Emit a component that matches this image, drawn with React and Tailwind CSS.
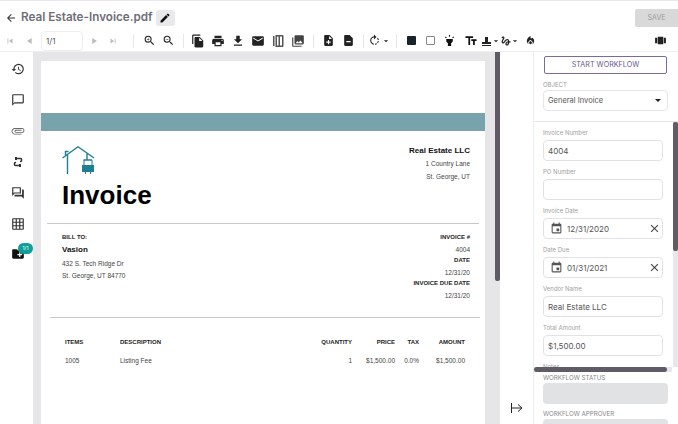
import React from 'react';
import {
  MdArrowBack, MdEdit, MdSkipPrevious, MdSkipNext, MdPlayArrow, MdZoomIn, MdZoomOut, MdFileCopy, MdPrint,
  MdFileDownload, MdEmail, MdPhotoLibrary, MdNoteAdd, MdRotateRight, MdArrowDropDown, MdHighlight,
  MdTextFields, MdLocalFireDepartment, MdHistory, MdChatBubbleOutline, MdAttachFile, MdOutlineForum,
  MdGridOn, MdEvent, MdClose, MdCreateNewFolder, MdGesture, MdViewCarousel,
} from 'react-icons/md';

const DOC_FONT = 'font-["Liberation_Sans",Arial,sans-serif]';

function Sep() {
  return <div className="w-px h-[14px] bg-gray-200" />;
}

function TextField({ label, value }) {
  return (
    <div className="mb-[6px]">
      <div className="text-[6px] leading-[10px] text-[#a0a0a0] mb-[2px]">{label}</div>
      <div className="h-[21px] border border-[#e2e2e6] rounded-[4px] px-[4px] flex items-center text-[8px] text-[#555]">{value}</div>
    </div>
  );
}

function DateField({ label, value }) {
  return (
    <div className="mb-[6px]">
      <div className="text-[6px] leading-[10px] text-[#a0a0a0] mb-[2px]">{label}</div>
      <div className="h-[21px] border border-[#e2e2e6] rounded-[4px] pl-[6px] pr-[1px] flex items-center text-[8px] text-[#555]">
        <MdEvent size={13} className="text-[#555] mr-[4px]" />
        <span className="flex-1">{value}</span>
        <MdClose size={13} className="text-[#444]" />
      </div>
    </div>
  );
}

export default function App() {
  return (
    <div className='w-[678px] h-[424px] overflow-hidden bg-white flex flex-col font-["Inter",sans-serif] border-t border-[#e8e8ec]'>
      {/* Title row */}
      <div className="h-[29px] pt-[5px] flex items-center shrink-0">
        <MdArrowBack size={12} className="ml-[5px] text-[#333]" />
        <span className="ml-[4px] text-[11.700px] font-semibold text-[#6e6e78] whitespace-nowrap">Real Estate-Invoice.pdf</span>
        <div className="ml-[3px] w-[19px] h-[16px] bg-[#e9e9ec] rounded-[3px] flex items-center justify-center">
          <MdEdit size={12} className="text-[#111]" />
        </div>
        <div className="ml-auto w-[43px] h-[18px] bg-[#d9d9d9] rounded-l-[2px] flex items-center justify-center text-[7px] text-[#9a9a9a]">SAVE</div>
      </div>

      {/* Toolbar */}
      <div className="h-[22px] flex items-center shrink-0 border-b border-[#eef0f3] text-[#222]">
        <div className="w-[41px] pl-[5px] flex items-center gap-[10px]">
          <MdSkipPrevious size={10} className="text-[#bbb]" />
          <MdPlayArrow size={10} className="text-[#bbb] rotate-180" />
        </div>
        <div className="w-[42px] h-[20px] border border-[#eceef0] rounded-[4px] text-[8px] text-[#555] flex items-center pl-[4px]">1/1</div>
        <div className="ml-[6px] flex items-center gap-[9px]">
          <MdPlayArrow size={10} className="text-[#bbb]" />
          <MdSkipNext size={10} className="text-[#bbb]" />
        </div>
        <div className="ml-[15px] mr-[9px]"><Sep /></div>
        <div className="flex items-center gap-[6px]">
          <MdZoomIn size={13} />
          <MdZoomOut size={13} />
        </div>
        <div className="ml-[8px] mr-[7px]"><Sep /></div>
        <div className="flex items-center gap-[6px]">
          <MdFileCopy size={14} />
          <MdPrint size={14} />
          <MdFileDownload size={14} />
          <MdEmail size={14} />
          <svg width="14" height="14" viewBox="0 0 14 14" className="text-[#555]" fill="currentColor">
            <path d="M2 2h1.500v10H2zM4.500 1h7a1 1 0 0 1 1 1v10a1 1 0 0 1-1 1h-7zM6 2.500V11.500h1.500V2.500zM9 2.500V11.500h2V2.500z" fillRule="evenodd" />
          </svg>
          <MdPhotoLibrary size={14} className="text-[#444]" />
        </div>
        <div className="ml-[8px] mr-[8px]"><Sep /></div>
        <div className="flex items-center gap-[7px]">
          <MdNoteAdd size={13} />
          <svg width="13" height="13" viewBox="0 0 24 24" fill="currentColor">
            <path d="M14 2H6c-1.100 0-2 .9-2 2v16c0 1.100.9 2 2 2h12c1.100 0 2-.9 2-2V8l-6-6zm2 13H8v-2h8v2z" />
          </svg>
        </div>
        <div className="ml-[8px] mr-[4px]"><Sep /></div>
        <div className="flex items-center">
          <MdRotateRight size={13} />
          <MdArrowDropDown size={10} />
        </div>
        <div className="ml-[5px] mr-[10px]"><Sep /></div>
        <div className="w-[9px] h-[9px] bg-[#18242c] rounded-[1px]" />
        <div className="ml-[10px] w-[9px] h-[9px] border border-[#888] rounded-[1px]" />
        <MdHighlight size={13} className="text-[#111] ml-[8px]" />
        <MdTextFields size={14} className="text-[#111] ml-[8px]" />
        <div className="ml-[4px] flex items-center">
          <div className="w-[9px] h-[10px] flex flex-col items-center justify-end">
            <div className="w-[3px] h-[5px] bg-[#222]" />
            <div className="w-[9px] h-[2px] bg-[#222]" />
            <div className="w-[9px] h-px mt-px bg-[#222]" />
          </div>
          <MdArrowDropDown size={10} />
        </div>
        <div className="-ml-px flex items-center">
          <MdGesture size={12} />
          <MdArrowDropDown size={10} className="-ml-[2px]" />
        </div>
        <MdLocalFireDepartment size={11} className="ml-[5px]" />
        <MdViewCarousel size={13} className="ml-auto mr-[11px]" />
      </div>

      {/* Body */}
      <div className="flex-1 flex min-h-0 relative">
        {/* Left rail */}
        <div className="w-[33px] shrink-0 flex flex-col items-center pt-[10px] pl-[2px] gap-[17px] relative text-[#333]">
          <MdHistory size={14} />
          <MdChatBubbleOutline size={14} />
          <MdAttachFile size={14} className="rotate-90 text-[#666]" />
          <svg width="14" height="14" viewBox="0 0 14 14" fill="none" stroke="currentColor" strokeWidth="1.500">
            <path d="M5 3.500h4.500c1.500 0 1.500 3 0 3H9M9 10.500H4.500c-1.500 0-1.500-3 0-3H5" />
            <path d="M5 2v3M9 9v3" strokeWidth="2" />
          </svg>
          <MdOutlineForum size={14} />
          <MdGridOn size={14} />
          <MdCreateNewFolder size={14} className="text-[#111] -mt-px" />
          <div className="absolute left-[18px] top-[191px] w-[15px] h-[11px] rounded-full bg-[#0d9f98] text-white text-[5px] flex items-center justify-center">1/1</div>
        </div>

        {/* Document viewer */}
        <div className="w-[467px] shrink-0 bg-[#e6e6e9] relative overflow-hidden pl-[8px] pt-[9px]">
          <div className={`w-[444px] h-[400px] bg-white text-[#444] ${DOC_FONT}`}>
            <div className="h-[52px]" />
            <div className="h-[18px] bg-[#78a3ad]" />
            <div className="h-[92px] pl-[21px] pr-[15px] flex justify-between">
              <div className="pt-[15px]">
                <svg width="33" height="28" viewBox="0 0 33 28" fill="none" stroke="#1f7f92" strokeWidth="1.400">
                  <path d="M0.500 12 L16 0.800 L32 12 M5.500 9 V28 M3.500 9 V5.500 H6.500 M25 7.500 V14 M21.500 14 H30" />
                  <rect x="20" y="19" width="12" height="7" fill="#1f7f92" stroke="none" />
                  <path d="M23.500 26 V28 M28.500 26 V28 M22 14 V19 M30 14 V19" strokeWidth="1" />
                </svg>
                <div className="text-[26px] leading-[30px] font-bold text-black mt-[6px]">Invoice</div>
              </div>
              <div className="pt-[14px] text-right">
                <div className="text-[8px] font-bold text-[#111] leading-[11px]">Real Estate LLC</div>
                <div className="text-[6.500px] leading-[13px] mt-[1px]">1 Country Lane</div>
                <div className="text-[6.500px] leading-[13px]">St. George, UT</div>
              </div>
            </div>
            <div className="h-px bg-[#c9c9c9] mx-[6px]" />
            <div className="h-[93px] pl-[21px] pr-[15px] flex justify-between">
              <div className="pt-[9px]">
                <div className="text-[6px] font-bold text-[#222] leading-[9px]">BILL TO:</div>
                <div className="text-[8px] font-bold text-[#111] leading-[12px] mt-[2px]">Vasion</div>
                <div className="text-[6.500px] leading-[13px] mt-[1px]">432 S. Tech Ridge Dr</div>
                <div className="text-[6.500px] leading-[12px]">St. George, UT 84770</div>
              </div>
              <div className="pt-[8px] text-right leading-[11.600px] text-[6.500px]">
                <div className="text-[6px] font-bold text-[#222]">INVOICE #</div>
                <div>4004</div>
                <div className="text-[6px] font-bold text-[#222]">DATE</div>
                <div>12/31/20</div>
                <div className="text-[6px] font-bold text-[#222]">INVOICE DUE DATE</div>
                <div>12/31/20</div>
              </div>
            </div>
            <div className="h-px bg-[#c9c9c9] ml-[9px] mr-[5px]" />
            <div className="pl-[24px] pr-[20px] pt-[20px] text-[6.500px]">
              <div className="flex font-bold text-[#222] text-[6px] leading-[9px]">
                <div className="w-[55px]">ITEMS</div>
                <div className="flex-1">DESCRIPTION</div>
                <div className="w-[40px] text-right">QUANTITY</div>
                <div className="w-[43px] text-right">PRICE</div>
                <div className="w-[24px] text-right">TAX</div>
                <div className="w-[46px] text-right">AMOUNT</div>
              </div>
              <div className="flex leading-[9px] mt-[9px]">
                <div className="w-[55px]">1005</div>
                <div className="flex-1">Listing Fee</div>
                <div className="w-[40px] text-right">1</div>
                <div className="w-[43px] text-right">$1,500.00</div>
                <div className="w-[24px] text-right">0.0%</div>
                <div className="w-[46px] text-right">$1,500.00</div>
              </div>
            </div>
          </div>
          <div className="absolute left-[462px] top-0 w-[5px] h-[229px] bg-[#5f5c68] rounded-b-[2px]" />
        </div>

        {/* Gutter */}
        <div className="w-[33px] shrink-0 flex items-end justify-center pb-[11px]">
          <svg width="12" height="10" viewBox="0 0 12 10" fill="none" stroke="#222" strokeWidth="1">
            <path d="M0.500 0 V10 M1 5 H11 M7 1.500 L11 5 L7 8.500" />
          </svg>
        </div>

        {/* Right panel */}
        <div className="flex-1 border-l border-[#eceef2] relative overflow-hidden text-[#555]">
          <div className="h-[70px] border-b border-[#e6e6ea] pl-[9px] pt-[4px]">
            <div className="ml-[1px] w-[123px] h-[18px] border border-[#7a6a9d] rounded-[2px] flex items-center justify-center text-[7.200px] text-[#6b5a90]">START WORKFLOW</div>
            <div className="text-[6px] leading-[9px] mt-[6px] text-[#9a9a9a]">OBJECT</div>
            <div className="mt-[1px] w-[125px] h-[21px] border border-[#e6e6ea] rounded-[4px] flex items-center justify-between pl-[4px] pr-[6px] text-[7.500px]">
              General Invoice
              <span className="w-0 h-0 border-x-[3px] border-x-transparent border-t-[3px] border-t-[#222]" />
            </div>
          </div>
          <div className="pl-[9px] pr-[15px] pt-[6px]">
            <TextField label="Invoice Number" value="4004" />
            <TextField label="PO Number" value="" />
            <DateField label="Invoice Date" value="12/31/2020" />
            <DateField label="Date Due" value="01/31/2021" />
            <TextField label="Vendor Name" value="Real Estate LLC" />
            <TextField label="Total Amount" value="$1,500.00" />
            <div className="text-[6px] leading-[10px] text-[#a0a0a0]">Notes</div>
          </div>
          <div className="absolute left-[9px] right-[10px] top-[320px] bg-white">
            <div className="text-[6.200px] leading-[9px] text-[#888] mt-px">WORKFLOW STATUS</div>
            <div className="h-[21px] mt-[1px] bg-[#e1e2e4] rounded-[4px]" />
            <div className="text-[6.200px] leading-[9px] text-[#888] mt-[5px]">WORKFLOW APPROVER</div>
            <div className="h-[21px] mt-[1px] bg-[#e1e2e4] rounded-[4px]" />
          </div>
          <div className="absolute left-0 right-[6px] top-[315px] h-[5px] bg-[#e8e8ec]">
            <div className="w-[133px] h-full bg-[#5f5c68] rounded-full" />
          </div>
          <div className="absolute right-0 top-[70px] w-[5px] h-[245px] bg-[#e8e8ec]">
            <div className="w-full h-[129px] bg-[#5f5c68] rounded-[2px]" />
          </div>
        </div>
      </div>
    </div>
  );
}
